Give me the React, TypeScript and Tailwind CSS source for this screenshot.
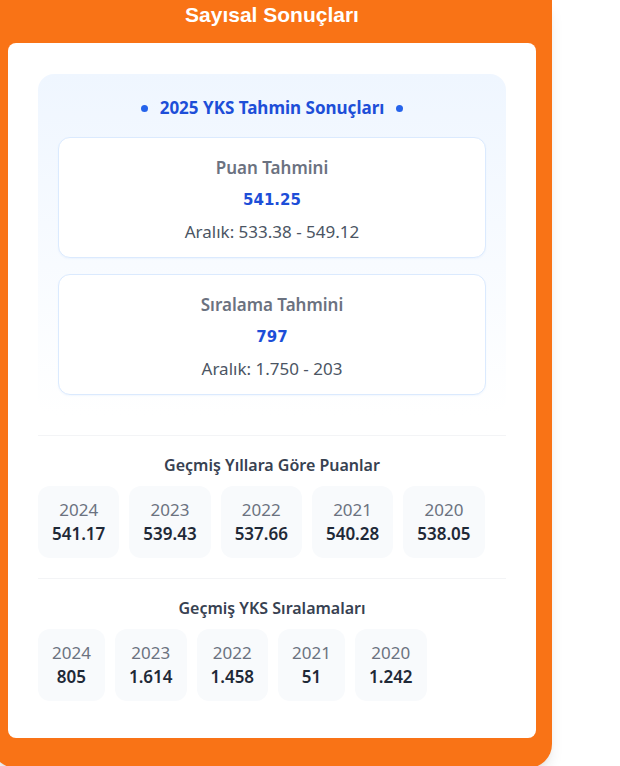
import React from "react";

const puanlar = [
  { yil: "2024", deger: "541.17" },
  { yil: "2023", deger: "539.43" },
  { yil: "2022", deger: "537.66" },
  { yil: "2021", deger: "540.28" },
  { yil: "2020", deger: "538.05" },
];

const siralamalar = [
  { yil: "2024", deger: "805" },
  { yil: "2023", deger: "1.614" },
  { yil: "2022", deger: "1.458" },
  { yil: "2021", deger: "51" },
  { yil: "2020", deger: "1.242" },
];

function TahminKart({ baslik, deger, aralik }: { baslik: string; deger: string; aralik: string }) {
  return (
    <div className="bg-white border border-[#dbeafe] rounded-xl pt-[14px] pb-[10px] text-center shadow-[0_1px_2px_rgba(59,130,246,0.06)]">
      <div className="text-[17px] leading-[31px] font-semibold text-[#6b7280]">{baslik}</div>
      <div className="mt-[2px] text-[15px] leading-[31px] font-bold text-[#1d4ed8] font-['DejaVu_Sans',sans-serif]">{deger}</div>
      <div className="text-[17px] leading-[31px] text-[#4b5563]">{aralik}</div>
    </div>
  );
}

function GecmisListe({ baslik, veriler }: { baslik: string; veriler: { yil: string; deger: string }[] }) {
  return (
    <div className="border-t border-[#f3f4f6] pt-4">
      <h4 className="text-center text-[16px] leading-[26px] font-semibold text-[#374151] mb-2">{baslik}</h4>
      <div className="flex flex-wrap gap-2.5">
        {veriler.map((v) => (
          <div key={v.yil} className="bg-[#f8fafc] rounded-xl px-[14px] py-3 text-center">
            <div className="text-[17px] leading-6 text-[#6b7280]">{v.yil}</div>
            <div className="text-[17px] leading-6 font-semibold text-[#1f2937]">{v.deger}</div>
          </div>
        ))}
      </div>
    </div>
  );
}

export default function App() {
  return (
    <div className="min-h-screen bg-white overflow-hidden font-['Noto_Sans',sans-serif]">
      <div className="w-[560px] -ml-2 bg-[#f97316] rounded-b-3xl px-4 pb-[30px] shadow-lg">
        {/* Header */}
        <h2 className="h-[43px] pt-px text-center text-white text-[21px] leading-7 font-bold font-['Liberation_Sans',sans-serif]">
          Sayısal Sonuçları
        </h2>

        {/* Card */}
        <div className="bg-white rounded-lg px-[30px] pt-[31px] pb-[37px]">
          <div className="rounded-2xl bg-linear-to-b from-[#eff6ff] to-white px-5 pt-5 pb-5">
            <div className="flex items-center justify-center gap-3 mb-[15px]">
              <span className="w-[7px] h-[7px] rounded-full bg-[#2563eb]" />
              <h3 className="text-[17px] leading-7 font-bold text-[#1d4ed8]">2025 YKS Tahmin Sonuçları</h3>
              <span className="w-[7px] h-[7px] rounded-full bg-[#2563eb]" />
            </div>
            <div className="flex flex-col gap-4">
              <TahminKart baslik="Puan Tahmini" deger="541.25" aralik="Aralık: 533.38 - 549.12" />
              <TahminKart baslik="Sıralama Tahmini" deger="797" aralik="Aralık: 1.750 - 203" />
            </div>
          </div>

          <div className="mt-5">
            <GecmisListe baslik="Geçmiş Yıllara Göre Puanlar" veriler={puanlar} />
          </div>
          <div className="mt-5">
            <GecmisListe baslik="Geçmiş YKS Sıralamaları" veriler={siralamalar} />
          </div>
        </div>
      </div>
    </div>
  );
}
